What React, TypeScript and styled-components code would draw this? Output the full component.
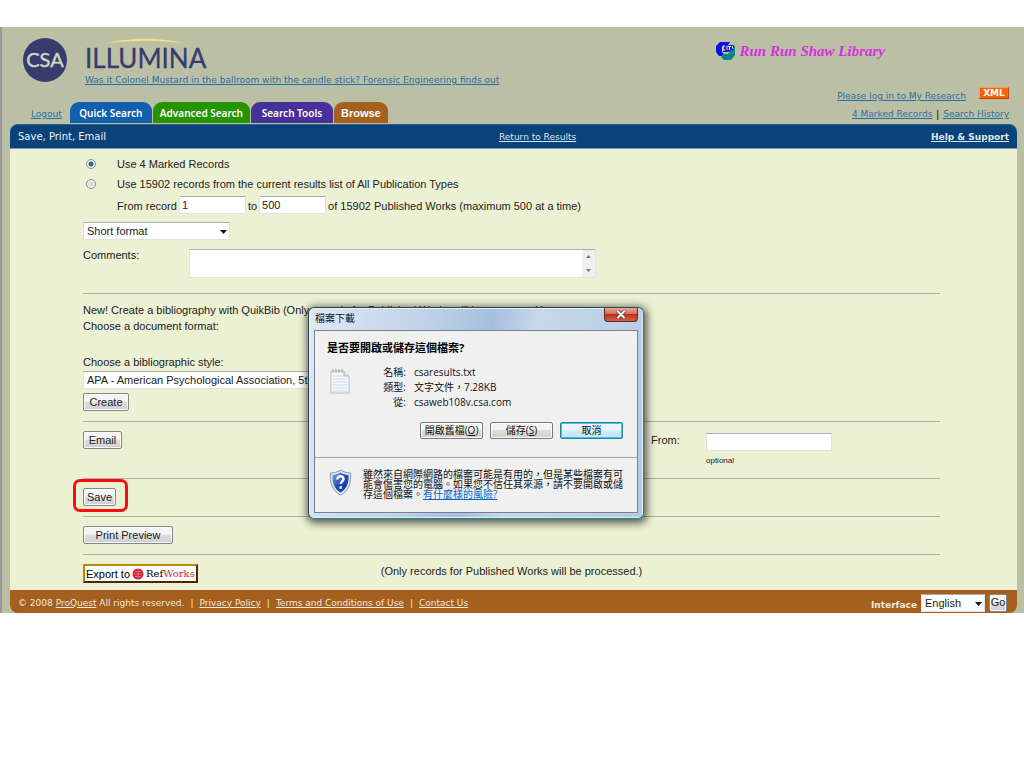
import React from "react";
import styled, { createGlobalStyle, css } from "styled-components";

const verdana = `"DejaVu Sans", sans-serif`;
const arial = `"Liberation Sans", sans-serif`;
const cjk = `"Open Sans", "Noto Sans CJK TC", sans-serif`;

const GlobalStyle = createGlobalStyle`
  * { box-sizing: border-box; }
  body { margin: 0; background: #fff; font-family: ${arial}; font-size: 11px; color: #222; }
  input, select, textarea, button { font: inherit; color: inherit; margin: 0; }
`;

const Page = styled.div`
  position: relative;
  margin-top: 27px;
  padding: 0 7px 0 8px;
  border-left: 2px solid #98989a;
  background: #bbbfa3;
`;

const TopRow = styled.header`
  display: flex;
  align-items: flex-start;
  height: 60px;
  padding: 10px 132px 0 12px;
`;

const Brand = styled.div`
  display: flex;
  flex-direction: column;
  margin-left: 17px;
`;

const Wordmark = styled.div`
  height: 37px;

  svg { display: block; }
`;

const Link = styled.a<{ $light?: boolean; $bold?: boolean }>`
  font-family: ${verdana};
  font-size: 9px;
  line-height: 12px;
  white-space: nowrap;
  font-weight: ${(p) => (p.$bold ? 700 : 400)};
  color: ${(p) => (p.$light ? "#dfe6ea" : "#2a6fad")};
`;

const Library = styled.div`
  display: flex;
  align-items: center;
  gap: 5px;
  height: 28px;
  margin-left: auto;
  font-family: "Liberation Serif", serif;
  font-size: 15px;
  font-weight: 700;
  font-style: italic;
  color: #d72fe2;
  white-space: nowrap;
`;

const NavRow = styled.div`
  display: flex;
  align-items: flex-end;
  height: 37px;
  padding: 0 8px 1px 21px;
`;

const Tabs = styled.nav`
  display: flex;
  gap: 1px;
  margin-left: 8px;
`;

const LogoutSlot = styled.div`
  padding-bottom: 3px;
`;

const Tab = styled.a<{ $bg: string; $plain?: boolean }>`
  height: 21px;
  min-width: ${(p) => (p.$plain ? 50 : 82)}px;
  padding: 0 7px;
  border-radius: 9px 9px 0 0;
  background: ${(p) => p.$bg};
  color: #fff;
  font-family: ${(p) => (p.$plain ? arial : `"Noto Sans", sans-serif`)};
  font-size: ${(p) => (p.$plain ? 11 : 10)}px;
  font-weight: ${(p) => (p.$plain ? 700 : 600)};
  line-height: 23px;
  text-align: center;
  text-decoration: none;
  white-space: nowrap;
`;

const UserLinks = styled.div`
  display: flex;
  flex-direction: column;
  align-items: flex-end;
  align-self: stretch;
  justify-content: space-between;
  margin-left: auto;
  padding-bottom: 3px;
`;

const UserLine = styled.div`
  display: flex;
  align-items: flex-end;
  gap: 4px;
  height: 15px;
`;

const XmlBadge = styled.a`
  align-self: flex-start;
  width: 30px;
  height: 12px;
  margin-left: 9px;
  border: 1px solid;
  border-color: #ff9a5a #b84a08 #b84a08 #ff9a5a;
  background: #f8640c;
  color: #fff;
  font: 700 9px/10px ${verdana};
  text-align: center;
  text-decoration: none;
`;

const TitleBar = styled.div`
  display: grid;
  grid-template-columns: 10fr auto 9fr;
  align-items: center;
  height: 25px;
  padding: 0 8px;
  border-radius: 8px 8px 0 0;
  border-top: 1px solid #2c5f86;
  border-bottom: 1px solid #7f9fb0;
  background: #0a427a;

  > :last-child { justify-self: end; }
`;

const PageTitle = styled.h1`
  margin: 0;
  font: 400 10px/14px ${verdana};
  color: #f2f5f8;
`;

const Content = styled.main`
  padding: 5px 77px 0 73px;
  background: #ecf1d4;
`;

const Line = styled.div<{ $h: number }>`
  display: flex;
  align-items: center;
  gap: 4px;
  height: ${(p) => p.$h}px;
  white-space: nowrap;
`;

const Indented = styled(Line)`
  align-items: flex-start;
  gap: 2px;
  padding: 2px 0 0 34px;
  line-height: 20px;
`;

const Radio = styled.input`
  appearance: none;
  width: 10px;
  height: 10px;
  margin: 0 17px 0 3px;
  border: 1px solid #8d9196;
  border-radius: 50%;
  background: radial-gradient(#d5d5d5, #fafafa);

  &:checked {
    background: radial-gradient(#2f9fe0 0, #12436e 35%, #e6ecef 50%);
  }
`;

const field = css`
  border: 1px solid #e0e3e4;
  border-top-color: #abadb3;
  border-radius: 0;
  background: #fff;
  outline: none;
`;

const TextField = styled.input<{ $w: number }>`
  ${field}
  width: ${(p) => p.$w}px;
  height: 18px;
  padding: 0 2px;
`;

const SelectBox = styled.div<{ $w: number }>`
  position: relative;
  width: ${(p) => p.$w}px;

  select {
    ${field}
    display: block;
    appearance: none;
    width: 100%;
    height: 18px;
    padding: 0 3px;
  }
  svg {
    position: absolute;
    right: 3px;
    top: 8px;
    pointer-events: none;
  }
`;

const FormatRow = styled.div`
  margin-top: 4px;
`;

const CommentRow = styled.div`
  display: flex;
  margin: 9px 0 15px;
  label { width: 106px; line-height: 13px; }
`;

const CommentBox = styled.div`
  ${field}
  display: flex;
  width: 407px;
  height: 29px;

  textarea {
    flex: 1;
    border: 0;
    padding: 2px;
    resize: none;
    outline: none;
    background: transparent;
    overflow: hidden;
  }
`;

const ScrollRail = styled.div`
  display: flex;
  flex-direction: column;
  justify-content: space-around;
  align-items: center;
  width: 13px;
  background: #f0f0f0;
`;

const Rule = styled.hr`
  height: 1px;
  margin: 0;
  border: 0;
  background: #aeb1a4;
`;

const Bibliography = styled.section`
  padding: 8px 0 10px;
  line-height: 16px;
`;

const StyleField = styled.div`
  display: flex;
  flex-direction: column;
  align-items: flex-start;
  gap: 1px;
  margin: 20px 0 4px;
`;

const Action = styled.section<{ $h: number }>`
  display: flex;
  align-items: flex-start;
  height: ${(p) => p.$h}px;
  padding-top: 9px;
`;

const Button = styled.button<{ $w: number }>`
  display: block;
  width: ${(p) => p.$w}px;
  height: 18px;
  padding: 0;
  border: 1px solid #85868a;
  border-radius: 2px;
  background: linear-gradient(#f4f4f4 0 45%, #dedede 50%, #cfcfcf);
  box-shadow: inset 0 0 0 1px #fafafa;
  line-height: 15px;
  white-space: nowrap;
`;

const Highlight = styled.div`
  position: relative;
  &::after {
    content: "";
    position: absolute;
    inset: -9px -12px -6px -10px;
    border: 3px solid #f90d0d;
    border-radius: 7px;
    pointer-events: none;
  }
`;

const FromGroup = styled.div`
  display: grid;
  grid-template-columns: 55px 126px;
  row-gap: 5px;
  margin: 2px 108px 0 auto;
  label { line-height: 15px; }
  small { grid-column: 2; font-size: 8px; line-height: 10px; }
`;

const ExportRow = styled.section`
  display: grid;
  grid-template-columns: 1fr auto 1fr;
  height: 35px;
  padding-top: 9px;
  line-height: 14px;
`;

const ExportButton = styled.button`
  display: flex;
  align-items: center;
  gap: 2px;
  width: 115px;
  height: 19px;
  padding: 0 1px;
  border: 2px solid;
  border-color: #b8860b #4a2508 #4a2508 #b8860b;
  background: #fff;
  color: #000;
  font-size: 11px;
  white-space: nowrap;
  b { font-family: "DejaVu Serif", serif; font-size: 10px; font-weight: 400; }
  i { font-style: normal; color: #cf2433; }
  svg { flex: none; }
`;

const Footer = styled.footer`
  display: flex;
  align-items: center;
  justify-content: space-between;
  height: 23px;
  padding: 2px 10px 0 8px;
  border-radius: 0 0 8px 8px;
  background: #a5601f;
  color: #f3e9dc;
  font-family: ${verdana};
  font-size: 9px;
  white-space: nowrap;
  a { color: #f3e9dc; }
`;

const Legal = styled.div`
  display: flex;
  gap: 6px;
`;

const LanguageForm = styled.form`
  display: flex;
  align-items: center;
  gap: 4px;
  label { font-weight: 700; padding-top: 4px; }
  select, button { font-family: ${arial}; font-size: 11px; color: #222; }
`;

const Dialog = styled.section`
  position: absolute;
  top: 280px;
  left: calc(50% - 205px);
  width: 336px;
  height: 212px;
  padding: 0 5px 5px;
  border: 1px solid #2d4650;
  border-right-color: #1c7f9a;
  border-bottom-color: #1c7f9a;
  border-radius: 6px;
  background: linear-gradient(100deg, #dfe9f3 0, #bcd0e6 35%, #a5bfdd 50%, #c6d8ea 62%, #b4cbe3);
  box-shadow: inset 0 0 0 1px #d9f1fa, 1px 2px 8px 2px rgba(0, 0, 0, 0.65);
  color: #111;
  font-family: ${cjk};
  font-size: 10px;
`;

const DialogTitle = styled.div`
  display: flex;
  justify-content: space-between;
  height: 22px;
  padding-left: 1px;
  line-height: 21px;
`;

const CloseButton = styled.button`
  display: flex;
  align-items: center;
  justify-content: center;
  width: 34px;
  height: 14px;
  padding: 0;
  border: 1px solid #5e2a2a;
  border-top: 0;
  border-radius: 0 0 4px 4px;
  background: linear-gradient(#e6a497 0, #d27060 45%, #b8301c 50%, #d4604a);
`;

const DialogBody = styled.div`
  height: 183px;
  border: 1px solid #77828e;
  background: #f0f0f0;
`;

const Ask = styled.div`
  height: 127px;
  padding: 8px 14px 0 12px;
  border-bottom: 1px solid #a5a5a5;
  h2 { margin: 0; font-size: 11px; line-height: 17px; color: #000; }
`;

const FileInfo = styled.div`
  display: flex;
  margin-top: 9px;
  padding-left: 3px;
  > svg { flex: none; margin-top: 4px; }
`;

const Facts = styled.dl`
  display: grid;
  grid-template-columns: 56px auto;
  column-gap: 8px;
  grid-auto-rows: 15px;
  margin: 0;
  line-height: 15px;
  dt { text-align: right; }
  dd { margin: 0; }
`;

const DialogActions = styled.div`
  display: flex;
  justify-content: flex-end;
  gap: 7px;
  margin-top: 12px;
`;

const DialogButton = styled.button<{ $primary?: boolean }>`
  width: 63px;
  height: 17px;
  padding: 0;
  border: 1px solid ${(p) => (p.$primary ? "#2a7f9f" : "#77797c")};
  border-radius: 2px;
  background: ${(p) =>
    p.$primary
      ? "linear-gradient(#eaf5fa 0 45%, #d3ebf6 50%, #c3e3f2)"
      : "linear-gradient(#f3f3f3 0 45%, #dedede 50%, #cfcfcf)"};
  box-shadow: inset 0 0 0 1px ${(p) => (p.$primary ? "#42c4ee" : "#fafafa")};
  line-height: 13px;
  white-space: nowrap;
`;

const Warning = styled.div`
  display: flex;
  align-items: flex-start;
  gap: 11px;
  padding: 11px 0 0 14px;
  > svg { flex: none; }
  p { margin: 0; width: 262px; line-height: 10px; }
  a { color: #0a64c8; }
`;

const Caret = () => (
  <svg width="7" height="4" viewBox="0 0 7 4" aria-hidden="true">
    <path d="M0 0h7L3.5 4z" fill="#111" />
  </svg>
);

const CsaLogo = () => (
  <svg width="46" height="46" viewBox="0 0 46 46" role="img" aria-label="CSA">
    <circle cx="23" cy="23" r="22" fill="#373c6e" />
    <text x="23" y="30" textAnchor="middle" fontFamily="Lato, sans-serif" fontSize="20" fill="#d3d6c2" stroke="#d3d6c2" strokeWidth="0.4">CSA</text>
  </svg>
);

const IlluminaLogo = () => (
  <svg width="130" height="37" viewBox="0 0 130 37" role="img" aria-label="ILLUMINA">
    <path d="M19 6.500Q60 -3 102 6.500Q60 1 19 6.500z" fill="#f5e27a" />
    <text x="0" y="31" fontFamily="Lato, sans-serif" fontSize="26" fill="#373c6e" stroke="#373c6e" strokeWidth="0.300">ILLUMINA</text>
  </svg>
);

const LibraryLogo = () => (
  <svg width="20" height="20" viewBox="0 0 20 20" aria-hidden="true">
    <path d="M5 1h10l-2 3H9L7 6v5l2 2-2 2H4L1 11V5z" fill="#0a12e6" />
    <path d="M16 5h4v9l-4 5H9l-3-3 3-3h4l2-2z" fill="#0f8389" />
    <path d="M9 4h10v5h-3l-1 2H8z" fill="#1a1fd0" />
    <path d="M10 5H8v4h2M12 5v4M13 5.500h3M14.500 6v3M17.500 5v2l1 1" stroke="#e8eadc" strokeWidth="1" fill="none" />
  </svg>
);

const FileIcon = () => (
  <svg width="20" height="25" viewBox="0 0 20 25" aria-hidden="true">
    <path d="M1 2h13l5 5v17H1z" fill="#f5f8fa" stroke="#b3b9be" />
    <path d="M14 2v5h5" fill="#dde3e7" stroke="#b3b9be" />
    <path d="M3 7h10M3 10h14M3 13h14M3 16h14M3 19h14M3 22h14" stroke="#c9dbe6" />
    <path d="M3 0v4M6 0v4M9 0v4M12 0v4" stroke="#a8adb1" strokeWidth="1" />
  </svg>
);

const Shield = () => (
  <svg width="23" height="27" viewBox="0 0 23 27" aria-hidden="true">
    <defs>
      <linearGradient id="shieldFill" x1="0" y1="0" x2="1" y2="1">
        <stop offset="0" stopColor="#7fa6e8" />
        <stop offset="0.5" stopColor="#1f4fc0" />
        <stop offset="1" stopColor="#0b2a8c" />
      </linearGradient>
    </defs>
    <path d="M11.500 1C8.500 3 5 4 1.500 4c-1 9 1.500 18 10 22 8.500-4 11-13 10-22-3.500 0-7-1-10-3z" fill="#dfe5ec" stroke="#8e99a6" />
    <path d="M11.500 3.500C9 5 6.300 5.800 3.500 6c-.5 7.500 1.700 14 8 17.500 6.300-3.500 8.500-10 8-17.500-2.800-.2-5.500-1-8-2.500z" fill="url(#shieldFill)" />
    <path d="M8.300 10.500c0-4.500 6.800-4 6.200-.3-.4 2.200-2.800 2.200-2.800 4.800M11.700 17.200v2.600" fill="none" stroke="#fff" strokeWidth="2.400" />
  </svg>
);

const DownloadDialog = () => (
  <Dialog role="dialog" aria-label="檔案下載">
    <DialogTitle>
      <span>檔案下載</span>
      <CloseButton aria-label="關閉">
        <svg width="10" height="9" viewBox="0 0 10 9" aria-hidden="true">
          <path d="M1.500 1l7 7M8.500 1l-7 7" stroke="#6b3a36" strokeWidth="3.600" />
          <path d="M1.500 1l7 7M8.500 1l-7 7" stroke="#fff" strokeWidth="2" />
        </svg>
      </CloseButton>
    </DialogTitle>
    <DialogBody>
      <Ask>
        <h2>是否要開啟或儲存這個檔案?</h2>
        <FileInfo>
          <FileIcon />
          <Facts>
            <dt>名稱:</dt>
            <dd>csaresults.txt</dd>
            <dt>類型:</dt>
            <dd>文字文件，7.28KB</dd>
            <dt>從:</dt>
            <dd>csaweb108v.csa.com</dd>
          </Facts>
        </FileInfo>
        <DialogActions>
          <DialogButton>開啟舊檔(<u>O</u>)</DialogButton>
          <DialogButton>儲存(<u>S</u>)</DialogButton>
          <DialogButton $primary>取消</DialogButton>
        </DialogActions>
      </Ask>
      <Warning>
        <Shield />
        <p>
          雖然來自網際網路的檔案可能是有用的，但是某些檔案有可能會傷害您的電腦。如果您不信任其來源，請不要開啟或儲存這個檔案。
          <a href="#risk">有什麼樣的風險?</a>
        </p>
      </Warning>
    </DialogBody>
  </Dialog>
);

export default function App() {
  return (
    <>
      <GlobalStyle />
      <Page>
        <TopRow>
          <CsaLogo />
          <Brand>
            <Wordmark>
              <IlluminaLogo />
            </Wordmark>
            <Link href="#forensic">
              Was it Colonel Mustard in the ballroom with the candle stick? Forensic Engineering finds out
            </Link>
          </Brand>
          <Library>
            <LibraryLogo />
            Run Run Shaw Library
          </Library>
        </TopRow>
        <NavRow>
          <LogoutSlot>
            <Link href="#logout">Logout</Link>
          </LogoutSlot>
          <Tabs>
            <Tab href="#quick" $bg="#125fae">Quick Search</Tab>
            <Tab href="#advanced" $bg="#259400">Advanced Search</Tab>
            <Tab href="#tools" $bg="#48309a">Search Tools</Tab>
            <Tab href="#browse" $bg="#a5601f" $plain>Browse</Tab>
          </Tabs>
          <UserLinks>
            <UserLine>
              <Link href="#login">Please log in to My Research</Link>
              <XmlBadge href="#xml">XML</XmlBadge>
            </UserLine>
            <UserLine>
              <Link href="#marked">4 Marked Records</Link>
              <span>|</span>
              <Link href="#history">Search History</Link>
            </UserLine>
          </UserLinks>
        </NavRow>

        <TitleBar>
          <PageTitle>Save, Print, Email</PageTitle>
          <Link href="#results" $light>Return to Results</Link>
          <Link href="#help" $light $bold>Help &amp; Support</Link>
        </TitleBar>

        <Content>
          <Line $h={20}>
            <Radio type="radio" name="source" id="marked" defaultChecked />
            <label htmlFor="marked">Use 4 Marked Records</label>
          </Line>
          <Line $h={20}>
            <Radio type="radio" name="source" id="all" />
            <label htmlFor="all">Use 15902 records from the current results list of All Publication Types</label>
          </Line>
          <Indented $h={24}>
            <label htmlFor="first">From record</label>
            <TextField $w={67} id="first" defaultValue="1" />
            <label htmlFor="last">to</label>
            <TextField $w={67} id="last" defaultValue="500" />
            <span>of 15902 Published Works (maximum 500 at a time)</span>
          </Indented>
          <FormatRow>
            <SelectBox $w={147}>
              <select aria-label="Record format">
                <option>Short format</option>
              </select>
              <Caret />
            </SelectBox>
          </FormatRow>
          <CommentRow>
            <label htmlFor="comments">Comments:</label>
            <CommentBox>
              <textarea id="comments" />
              <ScrollRail>
                <svg width="5" height="3" viewBox="0 0 5 3" aria-hidden="true">
                  <path d="M0 3h5L2.500 0z" fill="#777" />
                </svg>
                <svg width="5" height="3" viewBox="0 0 5 3" aria-hidden="true">
                  <path d="M0 0h5L2.500 3z" fill="#777" />
                </svg>
              </ScrollRail>
            </CommentBox>
          </CommentRow>

          <Rule />
          <Bibliography>
            <div>New! Create a bibliography with QuikBib (Only records for Published Works will be processed.)</div>
            <div>Choose a document format:</div>
            <StyleField>
              <label htmlFor="bibstyle">Choose a bibliographic style:</label>
              <SelectBox $w={300}>
                <select id="bibstyle">
                  <option>APA - American Psychological Association, 5th Edition</option>
                </select>
                <Caret />
              </SelectBox>
            </StyleField>
            <Button $w={46}>Create</Button>
          </Bibliography>

          <Rule />
          <Action $h={56}>
            <Button $w={39}>Email</Button>
            <FromGroup>
              <label htmlFor="from">From:</label>
              <TextField $w={126} id="from" />
              <small>optional</small>
            </FromGroup>
          </Action>

          <Rule />
          <Action $h={37}>
            <Highlight>
              <Button $w={33}>Save</Button>
            </Highlight>
          </Action>

          <Rule />
          <Action $h={37}>
            <Button $w={90}>Print Preview</Button>
          </Action>

          <Rule />
          <ExportRow>
            <ExportButton>
              Export to
              <svg width="12" height="12" viewBox="0 0 12 12" aria-hidden="true">
                <circle cx="6" cy="6" r="5.500" fill="#cf2433" />
                <path d="M3 3.500h6M2 6h8M3 8.500h6M6 1v10" stroke="#e88a90" strokeWidth="0.700" />
              </svg>
              <b>Ref<i>Works</i></b>
            </ExportButton>
            <span>(Only records for Published Works will be processed.)</span>
          </ExportRow>
        </Content>

        <Footer>
          <Legal>
            <span>© 2008 <a href="#proquest">ProQuest</a> All rights reserved.</span>
            <span>|</span>
            <a href="#privacy">Privacy Policy</a>
            <span>|</span>
            <a href="#terms">Terms and Conditions of Use</a>
            <span>|</span>
            <a href="#contact">Contact Us</a>
          </Legal>
          <LanguageForm>
            <label htmlFor="language">Interface</label>
            <SelectBox $w={64}>
              <select id="language">
                <option>English</option>
              </select>
              <Caret />
            </SelectBox>
            <Button $w={18} type="button">Go</Button>
          </LanguageForm>
        </Footer>

        <DownloadDialog />
      </Page>
    </>
  );
}
